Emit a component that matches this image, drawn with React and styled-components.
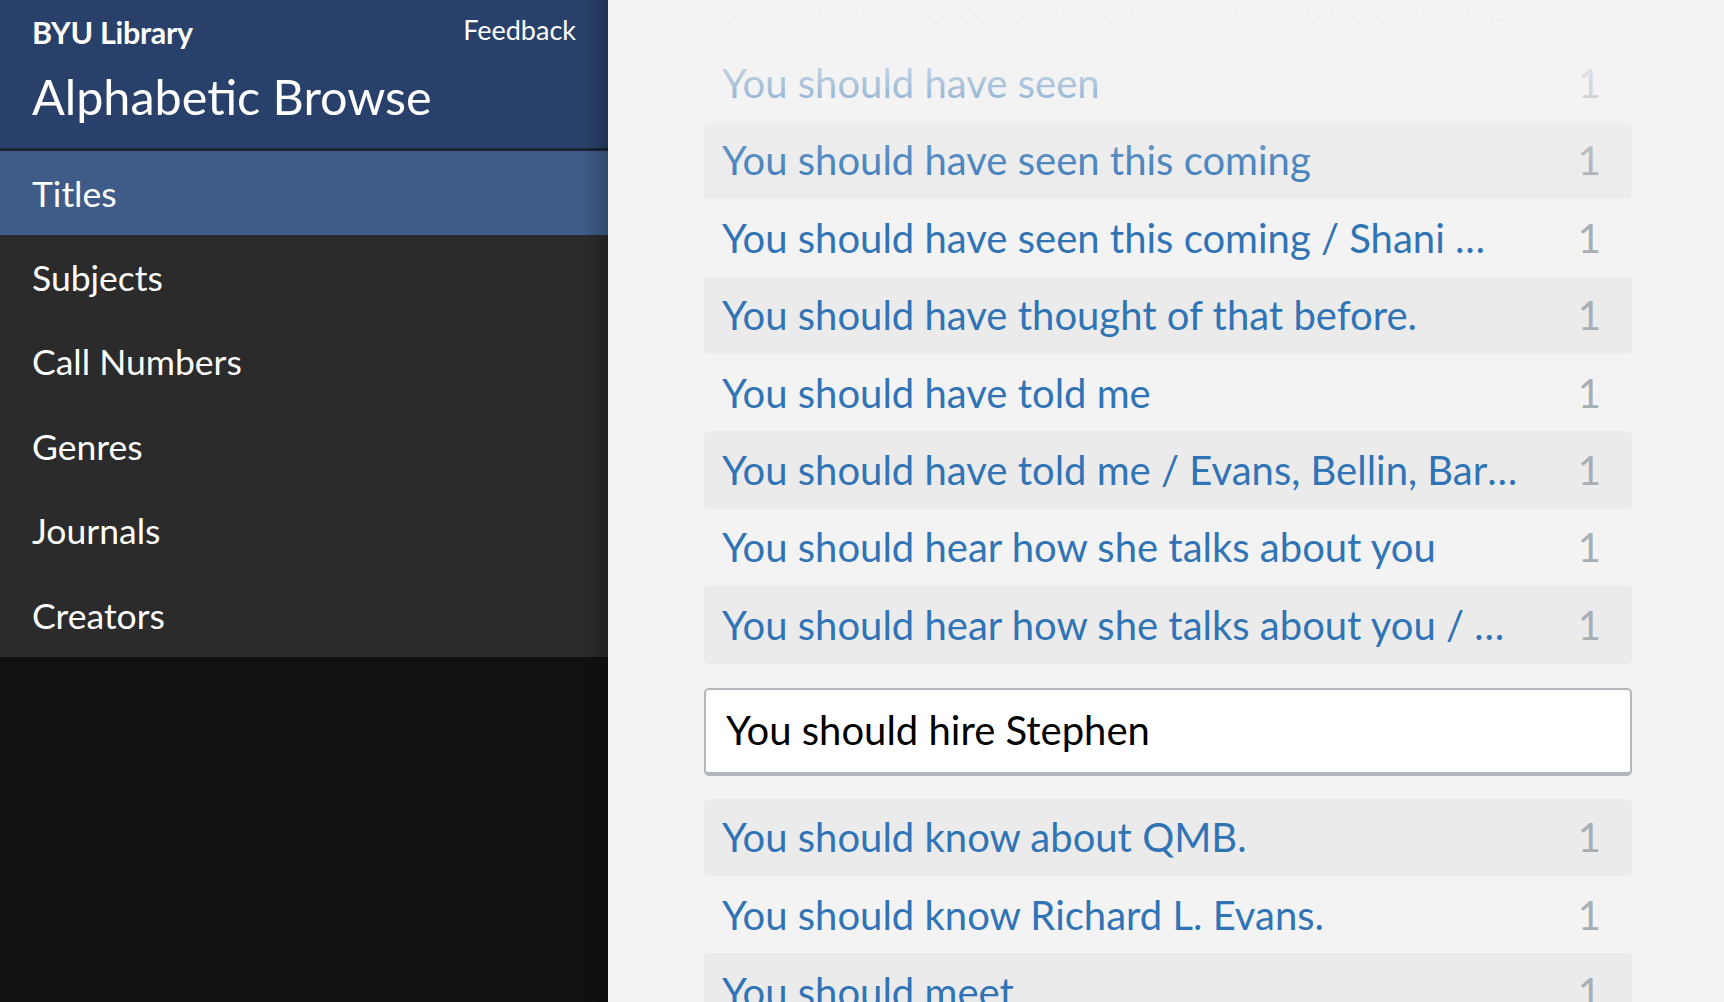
import React from 'react'
import styled, { createGlobalStyle } from 'styled-components'

const GlobalStyle = createGlobalStyle`
  html, body {
    margin: 0;
    padding: 0;
    height: 100%;
  }
  body {
    font-family: Lato, "Open Sans", sans-serif;
    background: #f3f3f3;
    overflow: hidden;
  }
`

const Page = styled.div`
  display: flex;
  height: 100vh;
`

const Sidebar = styled.aside`
  position: relative;
  flex: 0 0 608px;
  display: flex;
  flex-direction: column;
  background: #111111;
  &::after {
    content: '';
    position: absolute;
    top: 0;
    right: 0;
    bottom: 0;
    width: 26px;
    background: linear-gradient(to right, rgba(0, 0, 0, 0), rgba(0, 0, 0, 0.22));
    pointer-events: none;
  }
`

const Header = styled.header`
  background: #29416a;
  border-bottom: 3px solid #1b2538;
  padding: 14px 32px 0;
  box-sizing: content-box;
  height: 134px;
  color: #fff;
`

const HeaderTop = styled.div`
  display: flex;
  justify-content: space-between;
  align-items: flex-start;
`

const Brand = styled.div`
  font-weight: 700;
  font-size: 30.5px;
  line-height: 36px;
  letter-spacing: -0.3px;
`

const Feedback = styled.a`
  font-size: 27px;
  line-height: 32px;
  color: #fff;
  text-decoration: none;
`

const Title = styled.h1`
  margin: 17px 0 0;
  font-weight: 400;
  font-size: 48.5px;
  line-height: 58px;
`

const Nav = styled.nav`
  background: #2b2b2b;
  display: flex;
  flex-direction: column;
`

const NavItem = styled.a`
  height: 84.4px;
  display: flex;
  align-items: center;
  padding-left: 32px;
  font-size: 35.5px;
  color: #fff;
  background: ${p => (p.$active ? '#3f5c88' : 'transparent')};
`

const Main = styled.main`
  position: relative;
  flex: 1;
  overflow: hidden;
  &::before {
    content: '';
    position: absolute;
    left: 0;
    right: 0;
    top: 0;
    height: 210px;
    background: linear-gradient(to bottom, rgba(243, 243, 243, 1), rgba(243, 243, 243, 0.95) 18%, rgba(243, 243, 243, 0.6) 42%, rgba(243, 243, 243, 0.15) 78%, rgba(243, 243, 243, 0));
    z-index: 1;
    pointer-events: none;
  }
`

const List = styled.div`
  width: 928px;
  margin: -33px 0 0 96px;
  display: flex;
  flex-direction: column;
`

const Row = styled.a`
  height: 77.4px;
  display: flex;
  align-items: center;
  gap: 60px;
  padding: 0 31px 0 18px;
  border-radius: 5px;
  background: ${p => (p.$shaded ? '#ebebeb' : 'transparent')};
  font-size: 40px;
  color: #3174b6;
  text-decoration: none;
`

const RowTitle = styled.span`
  flex: 1;
  min-width: 0;
  white-space: nowrap;
  overflow: hidden;
  text-overflow: ellipsis;
`

const Count = styled.span`
  flex: 0 0 auto;
  color: #a7aeb4;
`

const Search = styled.input`
  height: 88px;
  margin: 24px 0 23px;
  box-sizing: border-box;
  border: 2px solid #b2b7bc;
  border-bottom-width: 4px;
  border-radius: 5px;
  background: #fff;
  padding: 0 20px 2px;
  font-family: Lato, "Open Sans", sans-serif;
  font-size: 40px;
  color: #000;
  outline: none;
`

const navItems = ['Titles', 'Subjects', 'Call Numbers', 'Genres', 'Journals', 'Creators']

const before = [
  'You should have known / Jean Hanff Korelitz',
  'You should have seen',
  'You should have seen this coming',
  'You should have seen this coming / Shani Mootoo',
  'You should have thought of that before.',
  'You should have told me',
  'You should have told me / Evans, Bellin, Barker',
  'You should hear how she talks about you',
  'You should hear how she talks about you / Melissa Pritchard',
]

const after = [
  'You should know about QMB.',
  'You should know Richard L. Evans.',
  'You should meet',
]

const Item = ({ title, shaded }) => (
  <Row $shaded={shaded}>
    <RowTitle>{title}</RowTitle>
    <Count>1</Count>
  </Row>
)

const App = () => (
  <Page>
    <GlobalStyle />
    <Sidebar>
      <Header>
        <HeaderTop>
          <Brand>BYU Library</Brand>
          <Feedback>Feedback</Feedback>
        </HeaderTop>
        <Title>Alphabetic Browse</Title>
      </Header>
      <Nav>
        {navItems.map((n, i) => (
          <NavItem key={n} $active={i === 0}>{n}</NavItem>
        ))}
      </Nav>
    </Sidebar>
    <Main>
      <List>
        {before.map((t, i) => (
          <Item key={t} title={t} shaded={i % 2 === 0} />
        ))}
        <Search defaultValue="You should hire Stephen" />
        {after.map((t, i) => (
          <Item key={t} title={t} shaded={i % 2 === 0} />
        ))}
      </List>
    </Main>
  </Page>
)

export default App
